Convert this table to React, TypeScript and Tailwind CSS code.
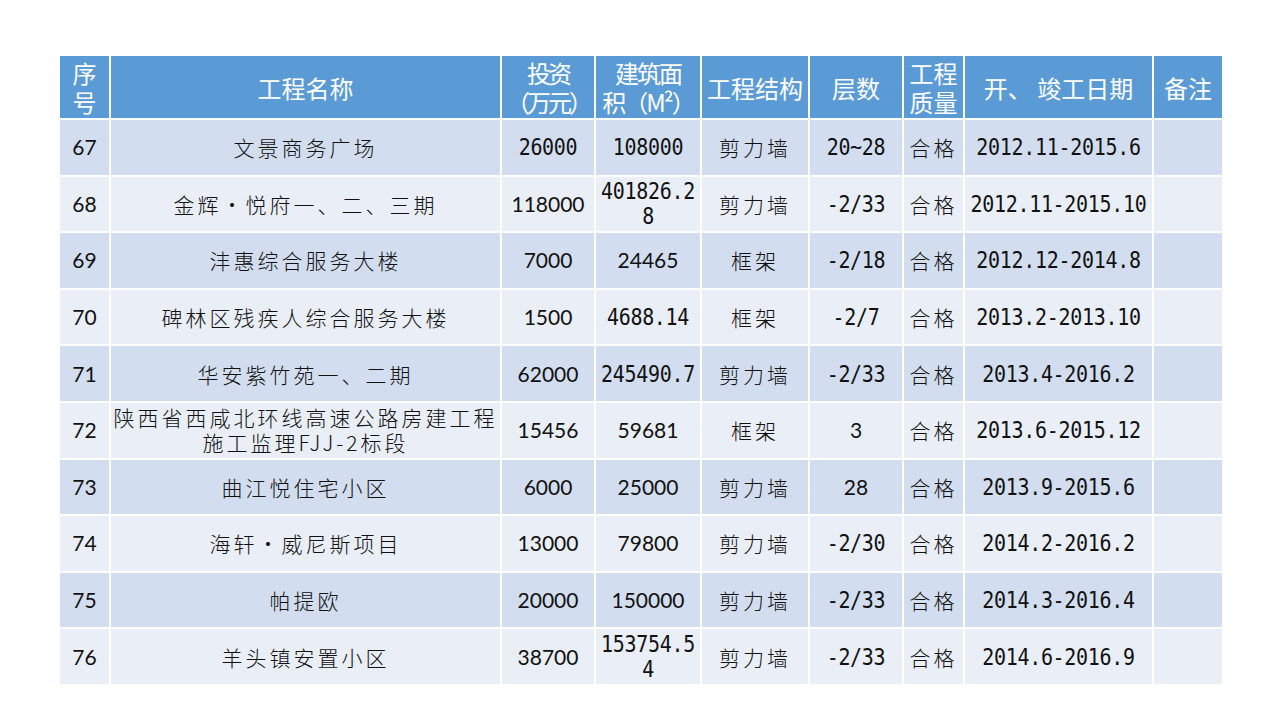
import React from 'react';

type Font = 'cjk' | 'lato' | 'mono';

interface Cell {
    text: string[];
    font: Font;
}

const fontClass: Record<Font, string> = {
    cjk: "font-['Noto_Sans_CJK_SC',sans-serif] text-[21px] tracking-[3px] font-light",
    lato: "font-['Lato','Noto_Sans_CJK_SC',sans-serif] text-[21px]",
    mono: "font-['DejaVu_Sans_Mono',monospace] text-[20px] tracking-[-0.3px]",
};

const c = (font: Font, ...text: string[]): Cell => ({ text, font });

const rows: Cell[][] = [
    [c('lato', '67'), c('cjk', '文景商务广场'), c('mono', '26000'), c('mono', '108000'), c('cjk', '剪力墙'), c('mono', '20~28'), c('cjk', '合格'), c('mono', '2012.11-2015.6'), c('lato', '')],
    [c('lato', '68'), c('cjk', '金辉•悦府一、二、三期'), c('lato', '118000'), c('mono', '401826.2', '8'), c('cjk', '剪力墙'), c('mono', '-2/33'), c('cjk', '合格'), c('mono', '2012.11-2015.10'), c('lato', '')],
    [c('lato', '69'), c('cjk', '沣惠综合服务大楼'), c('lato', '7000'), c('lato', '24465'), c('cjk', '框架'), c('mono', '-2/18'), c('cjk', '合格'), c('mono', '2012.12-2014.8'), c('lato', '')],
    [c('lato', '70'), c('cjk', '碑林区残疾人综合服务大楼'), c('lato', '1500'), c('mono', '4688.14'), c('cjk', '框架'), c('mono', '-2/7'), c('cjk', '合格'), c('mono', '2013.2-2013.10'), c('lato', '')],
    [c('lato', '71'), c('cjk', '华安紫竹苑一、二期'), c('lato', '62000'), c('mono', '245490.7'), c('cjk', '剪力墙'), c('mono', '-2/33'), c('cjk', '合格'), c('mono', '2013.4-2016.2'), c('lato', '')],
    [c('lato', '72'), c('cjk', '陕西省西咸北环线高速公路房建工程', '施工监理FJJ-2标段'), c('lato', '15456'), c('lato', '59681'), c('cjk', '框架'), c('lato', '3'), c('cjk', '合格'), c('mono', '2013.6-2015.12'), c('lato', '')],
    [c('lato', '73'), c('cjk', '曲江悦住宅小区'), c('lato', '6000'), c('lato', '25000'), c('cjk', '剪力墙'), c('lato', '28'), c('cjk', '合格'), c('mono', '2013.9-2015.6'), c('lato', '')],
    [c('lato', '74'), c('cjk', '海轩•威尼斯项目'), c('lato', '13000'), c('lato', '79800'), c('cjk', '剪力墙'), c('mono', '-2/30'), c('cjk', '合格'), c('mono', '2014.2-2016.2'), c('lato', '')],
    [c('lato', '75'), c('cjk', '帕提欧'), c('lato', '20000'), c('lato', '150000'), c('cjk', '剪力墙'), c('mono', '-2/33'), c('cjk', '合格'), c('mono', '2014.3-2016.4'), c('lato', '')],
    [c('lato', '76'), c('cjk', '羊头镇安置小区'), c('lato', '38700'), c('mono', '153754.5', '4'), c('cjk', '剪力墙'), c('mono', '-2/33'), c('cjk', '合格'), c('mono', '2014.6-2016.9'), c('lato', '')],
];

const headers: { lines: string[]; extra?: string }[] = [
    { lines: ['序', '号'] },
    { lines: ['工程名称'] },
    { lines: ['投资', '（万元）'], extra: 'tracking-[-3px]' },
    { lines: ['建筑面', '积（M²）'], extra: 'tracking-[-2px]' },
    { lines: ['工程结构'] },
    { lines: ['层数'] },
    { lines: ['工程', '质量'] },
    { lines: ['开、 竣工日期'] },
    { lines: ['备注'] },
];

const App: React.FC = () => {
    return (
        <div className="w-[1280px] h-[720px] bg-white pt-[56px] pl-[60px]">
            <div className="grid w-[1162px] grid-cols-[49px_389px_92px_104px_106px_92px_59px_187px_68px] grid-rows-[62px_repeat(10,54.6px)] gap-[2px] bg-white">
                {headers.map((h, i) => (
                    <div
                        key={i}
                        className={`bg-[#5B9BD5] text-white flex flex-col items-center justify-center overflow-hidden whitespace-nowrap font-['Noto_Sans_CJK_SC',sans-serif] text-[24px] leading-[29px] ${h.extra ?? ''}`}
                    >
                        {h.lines.map((l, j) => (
                            <span key={j} className="block h-[29px]">
                                {l}
                            </span>
                        ))}
                    </div>
                ))}
                {rows.map((row, r) =>
                    row.map((cell, i) => (
                        <div
                            key={`${r}-${i}`}
                            className={`${r % 2 === 0 ? 'bg-[#D2DEEF]' : 'bg-[#E9EEF7]'} text-[#111] flex flex-col items-center justify-center whitespace-nowrap overflow-hidden ${cell.text.length > 1 ? 'leading-[25px]' : 'leading-[28px]'} ${fontClass[cell.font]}`}
                        >
                            {cell.text.map((t, j) => (
                                <span key={j} className={cell.font === 'mono' ? 'block scale-y-[1.12]' : 'block'}>
                                    {t}
                                </span>
                            ))}
                        </div>
                    ))
                )}
            </div>
        </div>
    );
};

export default App;
